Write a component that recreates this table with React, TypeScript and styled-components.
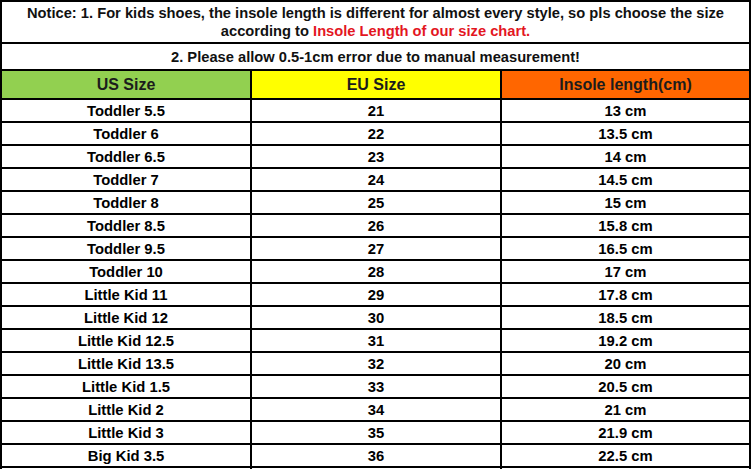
import React from "react";
import styled, { createGlobalStyle } from "styled-components";

const GlobalStyle = createGlobalStyle`
  html, body {
    margin: 0;
    padding: 0;
    background: #ffffff;
    overflow: hidden;
  }
  body {
    font-family: "Liberation Sans", Arial, sans-serif;
    color: #000;
  }
`;

const Chart = styled.div`
  width: 751px;
  border-top: 2px solid #000;
  border-left: 2px solid #000;
  box-sizing: border-box;
`;

const NoticeRow = styled.div<{ $h: number }>`
  height: ${(p) => p.$h}px;
  box-sizing: border-box;
  border-right: 2px solid #000;
  border-bottom: 2px solid #000;
  display: flex;
  align-items: center;
  justify-content: center;
  text-align: center;
  font-weight: bold;
  font-size: 14.7px;
  line-height: 18px;
  padding: 0 8px;
  color: #111;
`;

const Red = styled.span`
  color: #e3161f;
`;

const Row = styled.div<{ $h: number }>`
  display: grid;
  grid-template-columns: 250px 250px 249px;
  height: ${(p) => p.$h}px;
`;

const Cell = styled.div<{ $bg?: string; $head?: boolean }>`
  box-sizing: border-box;
  border-right: 2px solid #000;
  border-bottom: 2px solid #000;
  background: ${(p) => p.$bg || "#fff"};
  display: flex;
  align-items: center;
  justify-content: center;
  font-weight: bold;
  font-size: ${(p) => (p.$head ? "16px" : "14.8px")};
  color: ${(p) => (p.$head ? "#1c1c1c" : "#000")};
  padding-top: 1px;
`;

const sizes: [string, string, string][] = [
  ["Toddler 5.5", "21", "13 cm"],
  ["Toddler 6", "22", "13.5 cm"],
  ["Toddler 6.5", "23", "14 cm"],
  ["Toddler 7", "24", "14.5 cm"],
  ["Toddler 8", "25", "15 cm"],
  ["Toddler 8.5", "26", "15.8 cm"],
  ["Toddler 9.5", "27", "16.5 cm"],
  ["Toddler 10", "28", "17 cm"],
  ["Little Kid 11", "29", "17.8 cm"],
  ["Little Kid 12", "30", "18.5 cm"],
  ["Little Kid 12.5", "31", "19.2 cm"],
  ["Little Kid 13.5", "32", "20 cm"],
  ["Little Kid 1.5", "33", "20.5 cm"],
  ["Little Kid 2", "34", "21 cm"],
  ["Little Kid 3", "35", "21.9 cm"],
  ["Big Kid 3.5", "36", "22.5 cm"],
];

const App = () => {
  return (
    <>
      <GlobalStyle />
      <Chart>
        <NoticeRow $h={42}>
          <div>
            Notice: 1. For kids shoes, the insole length is different for almost every style, so pls choose the size
            <br />
            according to <Red>Insole Length of our size chart.</Red>
          </div>
        </NoticeRow>
        <NoticeRow $h={27}>2. Please allow 0.5-1cm error due to manual measurement!</NoticeRow>
        <Row $h={29}>
          <Cell $head $bg="#92d050">US Size</Cell>
          <Cell $head $bg="#ffff00">EU Size</Cell>
          <Cell $head $bg="#ff6600">Insole length(cm)</Cell>
        </Row>
        {sizes.map((s) => (
          <Row key={s[0]} $h={23}>
            <Cell>{s[0]}</Cell>
            <Cell>{s[1]}</Cell>
            <Cell>{s[2]}</Cell>
          </Row>
        ))}
        <Row $h={23}>
          <Cell />
          <Cell />
          <Cell />
        </Row>
      </Chart>
    </>
  );
};

export default App;
